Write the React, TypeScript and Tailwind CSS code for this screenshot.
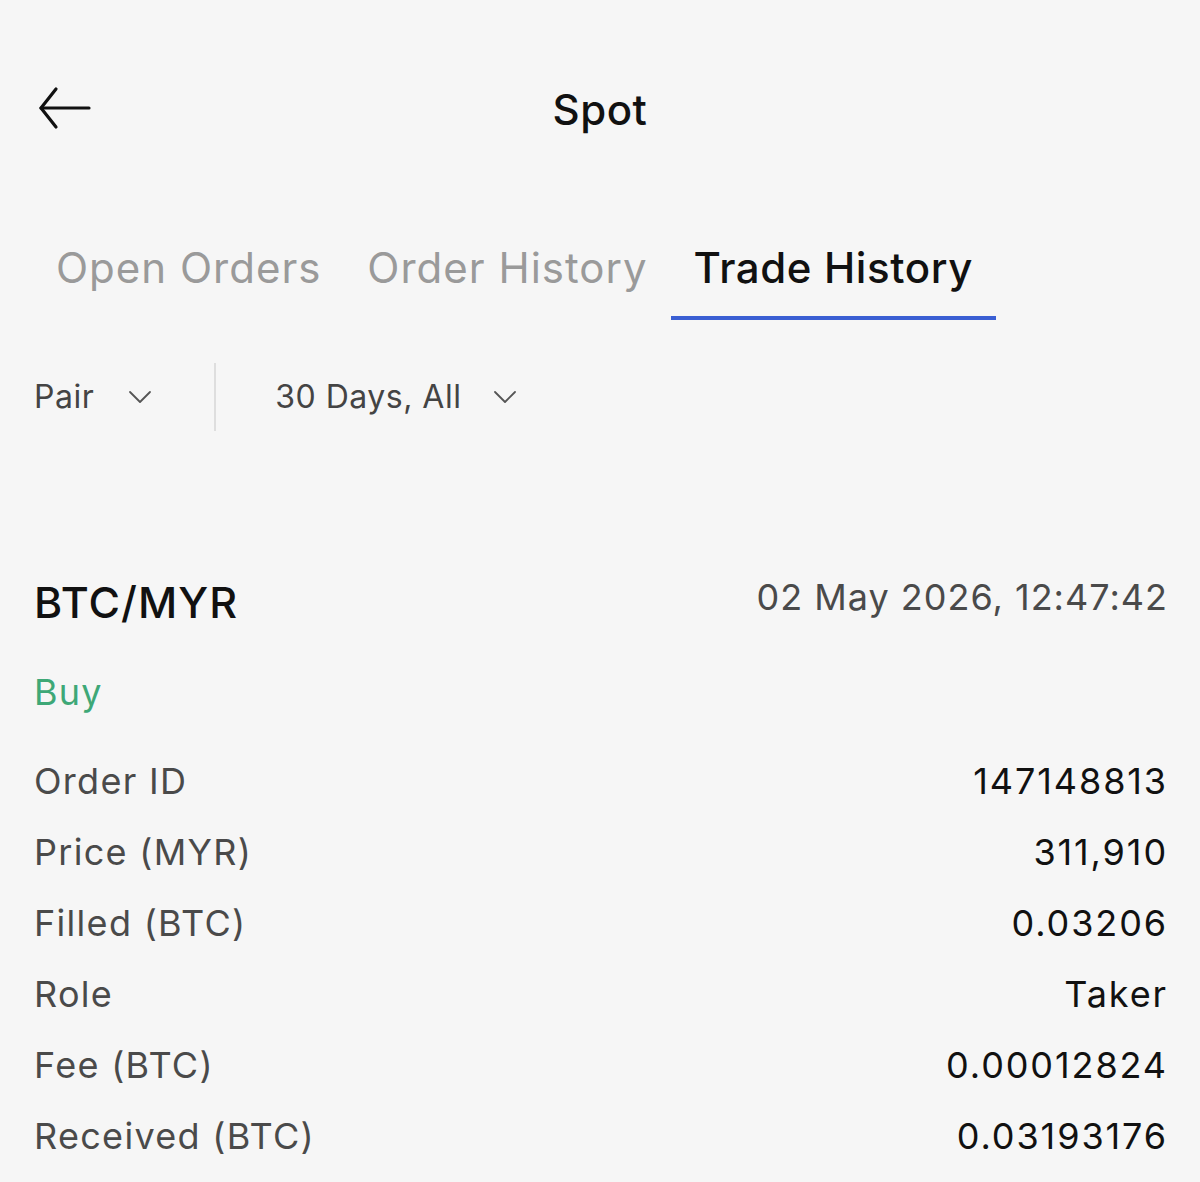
const rows = [
  { label: "Order ID", value: "147148813" },
  { label: "Price (MYR)", value: "311,910" },
  { label: "Filled (BTC)", value: "0.03206" },
  { label: "Role", value: "Taker" },
  { label: "Fee (BTC)", value: "0.00012824" },
  { label: "Received (BTC)", value: "0.03193176" },
];

const tabs = ["Open Orders", "Order History", "Trade History"];

function Chevron() {
  return (
    <svg className="h-[14px] w-[24px]" viewBox="0 0 24 14" fill="none" stroke="#555" strokeWidth={1.8} strokeLinecap="round" strokeLinejoin="round">
      <path d="M2 2L12 12L22 2" />
    </svg>
  );
}

export default function App() {
  return (
    <div className="min-h-[1182px] w-[1200px] bg-[#f6f6f6] font-['Inter',sans-serif] text-[#111]">
      {/* header */}
      <div className="relative flex h-[220px] items-start pt-[80px]">
        <button className="ml-[36px] flex h-[56px] w-[60px] items-center">
          <svg className="h-[56px] w-[60px]" viewBox="0 0 60 56" fill="none" stroke="#111" strokeWidth={3.2} strokeLinecap="round" strokeLinejoin="round">
            <path d="M5 28H53" />
            <path d="M20 9L5 28L20 47" />
          </svg>
        </button>
        <h1 className="absolute left-0 right-0 top-[84px] text-center text-[42px] font-medium leading-[52px] tracking-[0.5px]">Spot</h1>
      </div>

      {/* tabs */}
      <div className="flex pl-[33px]">
        {tabs.map((t, i) => {
          const active = i === 2;
          return (
            <div key={t} className="flex flex-col">
              <span
                className={`px-[23px] text-[42px] leading-[96px] ${
                  active ? "font-medium tracking-[0.6px] text-[#111]" : "tracking-[1px] text-[#9a9a9a]"
                }`}
              >
                {t}
              </span>
              <div className={`h-[4px] ${active ? "bg-[#3a5fd3]" : "bg-transparent"}`} />
            </div>
          );
        })}
      </div>

      {/* filters */}
      <div className="mt-[42px] flex h-[70px] items-center px-[34px] text-[32px] tracking-[0.5px] text-[#444]">
        <div className="flex items-center">
          <span>Pair</span>
          <span className="ml-[34px] flex items-center">
            <Chevron />
          </span>
        </div>
        <div className="ml-[62px] h-[68px] w-[2px] bg-[#dedede]" />
        <div className="ml-[59px] flex items-center">
          <span>30 Days, All</span>
          <span className="ml-[32px] flex items-center">
            <Chevron />
          </span>
        </div>
      </div>

      {/* trade card */}
      <div className="mt-[143px] pl-[34px] pr-[32px]">
        <div className="flex items-center justify-between">
          <span className="text-[43px] font-medium leading-[54px] tracking-[1px] text-[#111]">BTC/MYR</span>
          <span className="-mt-[10px] text-[36px] leading-[54px] tracking-[1px] text-[#4a4a4a]">02 May 2026, 12:47:42</span>
        </div>
        <div className="mt-[38px] text-[36px] leading-[50px] tracking-[1.2px] text-[#3ea877]">Buy</div>
        <div className="mt-[28px] flex flex-col">
          {rows.map((r) => (
            <div key={r.label} className="flex h-[71px] items-center justify-between text-[36px]">
              <span className="tracking-[1.3px] text-[#4a4a4a]">{r.label}</span>
              <span className="tracking-[1.9px] text-[#111]">{r.value}</span>
            </div>
          ))}
        </div>
      </div>
    </div>
  );
}
